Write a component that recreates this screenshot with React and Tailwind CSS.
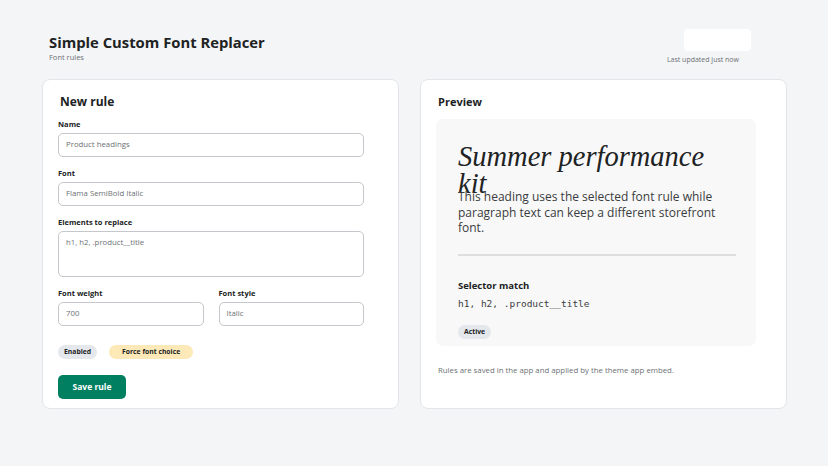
const ui = { fontFamily: '"Open Sans", "Noto Sans", sans-serif' };

function Field({ label, value, className = "", tall = false }) {
  return (
    <div className={className}>
      <div className="text-[7.5px] font-bold leading-[10px] text-[#202223]">{label}</div>
      <div
        className={`mt-[4px] rounded-[5px] border border-[#c4c7cb] bg-white px-[7px] text-[7.8px] text-[#6d7175] ${
          tall ? "h-[46px] pt-[5px]" : "flex h-[24px] items-center"
        }`}
      >
        {value}
      </div>
    </div>
  );
}

function Badge({ children, tone = "gray" }) {
  return (
    <span
      className={`inline-flex h-[14px] items-center rounded-full text-[6.8px] font-bold text-[#202223] ${
        tone === "yellow" ? "bg-[#fde9b7] px-[13px]" : "bg-[#e4e8ed] px-[6px]"
      }`}
    >
      {children}
    </span>
  );
}

export default function App() {
  return (
    <div className="min-h-[466px] w-full bg-[#f4f5f7] px-[42px] pt-[31px]" style={ui}>
      <header className="flex items-start justify-between">
        <div className="pl-[7px]">
          <h1 className="text-[14.8px] font-bold leading-[22px] text-[#202223]">Simple Custom Font Replacer</h1>
          <p className="text-[7.5px] leading-[9px] text-[#6d7175]">Font rules</p>
        </div>
        <div className="mr-[35px] flex flex-col items-end">
          <div className="mt-[-2px] h-[22px] w-[67px] rounded-[4px] bg-white" />
          <p className="mr-[12px] mt-[4px] text-[7px] leading-[10px] text-[#6d7175]">Last updated just now</p>
        </div>
      </header>

      <main className="mt-[14px] grid grid-cols-[357px_367px] gap-[21px]">
        <section className="h-[330px] rounded-[8px] border border-[#e3e5e8] bg-white px-[15px] pt-[14px]">
          <h2 className="pl-[2px] text-[12px] font-bold leading-[16px] text-[#202223]">New rule</h2>
          <div className="mt-[9px] flex w-[306px] flex-col gap-[11px]">
            <Field label="Name" value="Product headings" />
            <Field label="Font" value="Flama SemiBold Italic" />
            <Field label="Elements to replace" value="h1, h2, .product__title" tall />
            <div className="grid grid-cols-2 gap-[15px]">
              <Field label="Font weight" value="700" />
              <Field label="Font style" value="Italic" />
            </div>
          </div>
          <div className="mt-[19px] flex gap-[12px]">
            <Badge>Enabled</Badge>
            <Badge tone="yellow">Force font choice</Badge>
          </div>
          <button
            type="button"
            className="mt-[16px] h-[24px] w-[68px] rounded-[5px] bg-[#008060] text-[8.5px] font-bold text-white"
          >
            Save rule
          </button>
        </section>

        <section className="h-[330px] rounded-[8px] border border-[#e3e5e8] bg-white px-[15px] pt-[14px]">
          <h2 className="pl-[2px] text-[11px] font-bold leading-[16px] text-[#202223]">Preview</h2>
          <div className="mt-[9px] h-[227px] w-[320px] rounded-[7px] bg-[#f8f8f8] px-[22px] pt-[24px]">
            <h3
              className="h-[46px] w-[262px] text-[28.5px] italic leading-[27px] text-[#202223]"
              style={{ fontFamily: '"Liberation Serif", serif' }}
            >
              Summer performance kit
            </h3>
            <p className="w-[260px] text-[12px] leading-[15.5px] text-[#3a3c3e]">
              This heading uses the selected font rule while paragraph text can keep a different storefront font.
            </p>
            <div className="mt-[18px] h-[2px] w-[278px] bg-[#dedede]" />
            <div className="mt-[23px] text-[9.5px] font-bold leading-[13px] text-[#202223]">Selector match</div>
            <div
              className="mt-[5px] text-[9.5px] leading-[13px] text-[#3a3c3e]"
              style={{ fontFamily: '"DejaVu Sans Mono", "Liberation Mono", monospace' }}
            >
              h1, h2, .product__title
            </div>
            <div className="mt-[6px]">
              <Badge>Active</Badge>
            </div>
          </div>
          <p className="mt-[19px] pl-[2px] text-[7.8px] leading-[11px] text-[#6d7175]">
            Rules are saved in the app and applied by the theme app embed.
          </p>
        </section>
      </main>
    </div>
  );
}
